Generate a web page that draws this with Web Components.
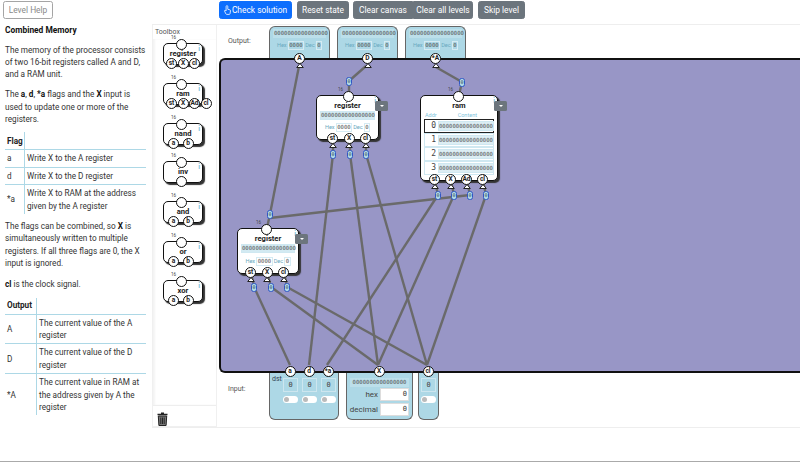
<!DOCTYPE html>
<html>
<head>
<meta charset="utf-8">
<title>Combined Memory</title>
<style>
  html, body { margin: 0; height: 462px; overflow: hidden; background: #fff; }
  body { font-family: Roboto, sans-serif; color: #333; }
</style>
</head>
<body>
<game-page></game-page>
<script>
const MONO = '"DejaVu Sans Mono", monospace';
const BITS = '0000000000000000';

class ToolBtn extends HTMLElement {
  constructor() {
    super();
    this.attachShadow({ mode: 'open' });
    this.shadowRoot.innerHTML = `
      <style>
        :host { display: block; flex: none; }
        div {
          display: flex; align-items: center; justify-content: center;
          height: 18px; box-sizing: border-box; border-radius: 2.5px;
          font-size: 8.4px; color: #fff; background: #6c757d; border: 1px solid #6c757d;
          white-space: nowrap;
        }
        :host([kind=primary]) div { background: #0d6efd; border-color: #0d6efd; }
        :host([kind=outline]) div { background: #fff; color: #8a8a8a; border-color: #a5a5a5; }
        :host([join=left]) div { border-radius: 2.5px 0 0 2.5px; }
        :host([join=right]) div { border-radius: 0 2.5px 2.5px 0; }
      </style>
      <div><slot></slot></div>`;
  }
}
customElements.define('tool-btn', ToolBtn);

class InfoTable extends HTMLElement {
  constructor() { super(); this.attachShadow({ mode: 'open' }); }
  connectedCallback() {
    const col = this.getAttribute('col');
    const rows = JSON.parse(this.getAttribute('rows'));
    this.shadowRoot.innerHTML = `
      <style>
        :host { display: block; }
        .t { display: grid; grid-template-columns: ${col}px 1fr; width: 141px; }
        .c { padding: 2px 0 2px 2px; line-height: 12.4px; display: flex; align-items: center; border-top: 1px solid #add8e6; }
        .c:nth-child(even) { border-left: 1px solid #add8e6; padding-left: 2px; }
        .h { border-top: 0; font-weight: 700; color: #222; height: ${this.getAttribute('head-h') || 17}px; box-sizing: border-box; }
      </style>
      <div class="t">
        <div class="c h">${this.getAttribute('head')}</div><div class="c h"></div>
        ${rows.map(r => `<div class="c">${r[0]}</div><div class="c">${r[1]}</div>`).join('')}
      </div>`;
  }
}
customElements.define('info-table', InfoTable);

class LevelPanel extends HTMLElement {
  constructor() {
    super();
    this.attachShadow({ mode: 'open' });
    this.shadowRoot.innerHTML = `
      <style>
        :host { display: block; width: 144px; flex: none; padding: 1px 0 0 5px; font-size: 8.2px; line-height: 12.4px; color: #333; }
        h2 { font-size: 8.4px; font-weight: 700; color: #111; margin: 5px 0 0; line-height: 12px; }
        p { margin: 7.5px 0 0; width: 143px; }
        b { color: #111; }
        tool-btn { width: 50px; margin-left: -2px; }
        info-table { margin-top: 7px; }
      </style>
      <tool-btn kind="outline">Level Help</tool-btn>
      <h2>Combined Memory</h2>
      <p>The memory of the processor consists of two 16-bit registers called A and D, and a RAM unit.</p>
      <p>The <b>a</b>, <b>d</b>, <b>*a</b> flags and the <b>X</b> input is used to update one or more of the registers.</p>
      <info-table head="Flag" col="19" rows='[["a","Write X to the A register"],["d","Write X to the D register"],["*a","Write X to RAM at the address given by the A register"]]'></info-table>
      <p style="margin-top:6px">The flags can be combined, so <b>X</b> is simultaneously written to multiple registers. If all three flags are 0, the X input is ignored.</p>
      <p style="margin-top:8.500px"><b>cl</b> is the clock signal.</p>
      <info-table head="Output" head-h="16" col="31" rows='[["A","The current value of the A register"],["D","The current value of the D register"],["*A","The current value in RAM at the address given by A the register"]]'></info-table>`;
  }
}
customElements.define('level-panel', LevelPanel);

// round connector: circle plus optional arrow and bus width note
class ConnPin extends HTMLElement {
  constructor() { super(); this.attachShadow({ mode: 'open' }); }
  connectedCallback() {
    const arrow = this.hasAttribute('arrow');
    this.shadowRoot.innerHTML = `
      <style>
        :host { display: block; position: absolute; width: 11px; height: 11px; left: ${this.getAttribute('x')}px; top: ${this.getAttribute('y')}px; margin: -5.5px 0 0 -5.5px; z-index: 3; }
        .o { width: 11px; height: 11px; box-sizing: border-box; border: 1.2px solid #111; border-radius: 50%; background: #fff; font: 700 6.6px/8.6px Roboto, sans-serif; color: #222; text-align: center; white-space: nowrap; }
        svg { position: absolute; left: 1.5px; top: 10px; }
        .w { position: absolute; left: -5px; top: -4px; font: 4.5px/5px Roboto, sans-serif; color: #444; }
      </style>
      <div class="o">${this.getAttribute('label') || ''}</div>
      ${this.hasAttribute('bus') ? '<span class="w">16</span>' : ''}
      ${arrow ? '<svg width="8" height="5" viewBox="0 0 8 5"><path d="M4 .5 7.3 4.5H.7Z" fill="#fff" stroke="#222" stroke-width="1"/></svg>' : ''}`;
  }
}
customElements.define('conn-pin', ConnPin);

// small value tag that sits on a wire
class WireTag extends HTMLElement {
  constructor() { super(); this.attachShadow({ mode: 'open' }); }
  connectedCallback() {
    this.shadowRoot.innerHTML = `
      <style>
        :host { position: absolute; display: block; left: ${this.getAttribute('x') - 3}px; top: ${this.getAttribute('y') - 4.5}px; z-index: 2; width: 6px; height: 9px; box-sizing: border-box; border: 1px solid #3157c4; border-radius: 2.5px; background: #add8e6; font: 5px/7px ${MONO}; color: #345; text-align: center; }
      </style>0`;
  }
}
customElements.define('wire-tag', WireTag);

class BitRow extends HTMLElement {
  constructor() {
    super();
    this.attachShadow({ mode: 'open' });
    this.shadowRoot.innerHTML = `
      <style>
        :host { display: block; font: 5.6px/7px ${MONO}; color: #555; background: #d3eaf2; border: 1px solid #cfe8f1; text-align: center; white-space: nowrap; }
      </style>${BITS}`;
  }
}
customElements.define('bit-row', BitRow);

class HexDec extends HTMLElement {
  constructor() {
    super();
    this.attachShadow({ mode: 'open' });
    this.shadowRoot.innerHTML = `
      <style>
        :host { display: flex; align-items: center; justify-content: center; gap: 1px; font: 5.6px/9px Roboto, sans-serif; color: #6aa9c0; white-space: nowrap; }
        span { font: 5.6px/7px ${MONO}; color: #555; border: 1px solid #d5ebf3; padding: 0 .5px; }
      </style>Hex <span>0000</span> Dec <span>0</span>`;
  }
}
customElements.define('hex-dec', HexDec);

class OutBox extends HTMLElement {
  constructor() { super(); this.attachShadow({ mode: 'open' }); }
  connectedCallback() {
    this.shadowRoot.innerHTML = `
      <style>
        :host { display: flex; flex-direction: column; gap: 3px; position: relative; width: 61px; height: 32px; box-sizing: border-box; padding: 2px 3px 0; background: #add8e6; border: 1px solid #666; border-bottom: 0; border-radius: 6px 6px 0 0; }
        bit-row { background: #bcdfea; border-color: #bcdfea; }
      </style>
      <bit-row></bit-row><hex-dec></hex-dec>
      <conn-pin x="29.500" y="31" label="${this.getAttribute('label')}" arrow></conn-pin>`;
  }
}
customElements.define('out-box', OutBox);

class Chip extends HTMLElement {
  constructor() { super(); this.attachShadow({ mode: 'open' }); }
  connectedCallback() {
    const w = +this.getAttribute('w'), h = +this.getAttribute('h');
    const pins = (this.getAttribute('pins') || '').split(',').filter(Boolean);
    const small = this.hasAttribute('small');
    const step = +this.getAttribute('step') || 16;
    const start = +this.getAttribute('start');
    const free = this.hasAttribute('x');
    this.shadowRoot.innerHTML = `
      <style>
        :host { display: block; position: ${free ? 'absolute' : 'relative'}; ${free ? `left:${this.getAttribute('x')}px;top:${this.getAttribute('y')}px;` : ''} width: ${w}px; height: ${h}px; box-sizing: border-box; background: #fff; border: 1.5px solid #111; border-radius: 5px; box-shadow: 2px 2px 1px #333; z-index: 1; }
        .n { text-align: center; font: 700 7.6px/10px Roboto, sans-serif; color: #222; margin-top: ${small ? 4.5 : 4.5}px; }
        .i { position: absolute; right: 2px; top: 1px; font: 700 7px/8px Roboto, sans-serif; color: #7fc4dc; }
        .menu { position: absolute; left: calc(100% - 3px); top: 5px; width: 13px; height: 10px; background: #6c757d; border-radius: 1.5px; }
        .menu::after { content: ""; position: absolute; left: 4.5px; top: 4px; border: 2px solid transparent; border-top: 2px solid #fff; }
        ::slotted(*) { margin: 0 3px; }
      </style>
      <div class="n">${this.getAttribute('name')}</div>
      <div class="i">i</div>
      <slot></slot>
      ${free ? '<div class="menu"></div>' : ''}
      <conn-pin x="${this.getAttribute('top')}" y="0" bus></conn-pin>
      ${pins.map((p, i) => `<conn-pin x="${start + i * step}" y="${h - 2.5}" label="${p}" ${free ? 'arrow' : ''}></conn-pin>`).join('')}`;
  }
}
customElements.define('chip-box', Chip);

class RamGrid extends HTMLElement {
  constructor() {
    super();
    this.attachShadow({ mode: 'open' });
    this.shadowRoot.innerHTML = `
      <style>
        :host { display: block; font: 5.5px/7px Roboto, sans-serif; color: #7fc4dc; }
        .h { display: flex; padding-left: 1px; margin-top: 1px; }
        .h span:last-child { margin-left: 21px; }
        .r { display: flex; align-items: center; height: 14px; border: 1px solid #cfe8f1; box-sizing: border-box; font: 8px/12px ${MONO}; color: #444; }
        .r.on { border: 1px solid #222; }
        .r b { font-weight: 400; width: 11px; text-align: right; flex: none; margin-right: 2px; }
        .r i { flex: 1; margin-right: 1px; font: normal 5.6px/8px ${MONO}; color: #555; background: #dcedf3; border: 1px solid #cfe8f1; white-space: nowrap; text-align: center; }
      </style>
      <div class="h"><span>Addr</span><span>Content</span></div>
      ${[0, 1, 2, 3].map(n => `<div class="r ${n ? '' : 'on'}"><b>${n}</b><i>${BITS}</i></div>`).join('')}`;
  }
}
customElements.define('ram-grid', RamGrid);

class ToolBox extends HTMLElement {
  constructor() {
    super();
    this.attachShadow({ mode: 'open' });
    this.shadowRoot.innerHTML = `
      <style>
        :host { display: flex; flex-direction: column; width: 65px; flex: none; box-sizing: border-box; margin-right: 2px; border: 1px solid #f0f0f0; border-top: 0; }
        .t { font-size: 7px; line-height: 10px; padding: 2px 0 0 2px; height: 14px; box-sizing: border-box; color: #555; }
        .l { flex: 1; background: #fff; position: relative; box-shadow: inset 2px 0 2px #f4f4f4; }
        chip-box { position: absolute; left: 10px; }
        .b { height: 21px; border-top: 1px solid #eee; padding: 5px 0 0 4px; box-sizing: border-box; }
      </style>
      <div class="t">Toolbox</div>
      <div class="l">
        <chip-box small name="register" w="40" h="22" pins="st,X,cl" start="7.500" step="11.500" top="17.500" style="top:4px"></chip-box>
        <chip-box small name="ram" w="40" h="22" pins="st,X,Ad,cl" start="7.500" step="11.500" top="17.500" style="top:44px"></chip-box>
        <chip-box small name="nand" w="40" h="22" pins="a,b" start="9.500" step="14.500" top="17.500" style="top:84px"></chip-box>
        <chip-box small name="inv" w="40" h="22" pins=" " start="17.500" top="17.500" style="top:122px"></chip-box>
        <chip-box small name="and" w="40" h="22" pins="a,b" start="9.500" step="14.500" top="17.500" style="top:162px"></chip-box>
        <chip-box small name="or" w="40" h="22" pins="a,b" start="9.500" step="14.500" top="17.500" style="top:202px"></chip-box>
        <chip-box small name="xor" w="40" h="22" pins="a,b" start="9.500" step="14.500" top="17.500" style="top:241px"></chip-box>
      </div>
      <div class="b"><svg width="11" height="14" viewBox="0 0 11 14"><path d="M4 .5h3v1.200h3.500v1.500H.5V1.700H4Z" fill="#222"/><path d="M1.300 4h8.400l-.6 9.500H1.900Z" fill="#777" stroke="#222"/><path d="M3.800 5.500v6.500M5.500 5.500v6.500M7.200 5.500v6.500" stroke="#111" stroke-width=".8"/></svg></div>`;
  }
}
customElements.define('tool-box', ToolBox);

class InCell extends HTMLElement {
  constructor() {
    super();
    this.attachShadow({ mode: 'open' });
    this.shadowRoot.innerHTML = `
      <style>
        :host { display: flex; flex-direction: column; align-items: center; gap: 4px; width: 15px; }
        .v { width: 15px; height: 14px; box-sizing: border-box; border: 1px solid #cde6ef; font: 7px/12px ${MONO}; color: #444; text-align: center; }
        .s { width: 15px; height: 7px; border-radius: 4px; background: #fff; position: relative; }
        .s::after { content: ""; position: absolute; left: 1px; top: 1px; width: 5px; height: 5px; border-radius: 50%; background: #bbb; }
      </style>
      <div class="v">0</div><div class="s"></div>`;
  }
}
customElements.define('in-cell', InCell);

class InBox extends HTMLElement {
  constructor() {
    super();
    this.attachShadow({ mode: 'open' });
    this.shadowRoot.innerHTML = `
      <style>
        :host { display: block; position: relative; height: 47px; box-sizing: border-box; background: #add8e6; border: 1px solid #666; border-top: 0; border-radius: 0 0 6px 6px; }
      </style><slot></slot>`;
  }
}
customElements.define('in-box', InBox);

class NumField extends HTMLElement {
  constructor() {
    super();
    this.attachShadow({ mode: 'open' });
    this.shadowRoot.innerHTML = `
      <style>
        :host { display: flex; align-items: center; justify-content: flex-end; gap: 2px; font: 8px/13px Roboto, sans-serif; color: #444; padding-right: 3px; }
        div { width: 29px; height: 13px; box-sizing: border-box; background: #fff; border: 1px solid #ddd; font: 7px/11px ${MONO}; text-align: right; padding-right: 1px; color: #333; }
      </style><slot></slot><div>0</div>`;
  }
}
customElements.define('num-field', NumField);

class WireCanvas extends HTMLElement {
  constructor() {
    super();
    this.attachShadow({ mode: 'open' });
    // coordinates are relative to the canvas corner
    const w = [
      [80, 8, 51, 156], [147, 8, 130, 23], [130, 23, 130, 37], [215, 8, 243, 24], [243, 24, 240, 37],
      [51, 160, 251, 137], [48, 170, 51, 156],
      [32, 214, 35, 229], [48, 214, 52, 229], [65, 214, 68, 229],
      [35, 229, 71, 307], [52, 229, 159, 307], [68, 229, 208, 307],
      [114, 82, 114, 96], [131, 82, 131, 96], [147, 82, 147, 96],
      [114, 96, 90, 307], [131, 96, 159, 307], [147, 96, 208, 307],
      [216, 123, 219, 137], [232, 123, 235, 137], [248, 123, 251, 137], [264, 123, 267, 137],
      [219, 137, 108, 307], [235, 137, 159, 307], [267, 137, 208, 307]
    ];
    const tags = [[130, 23], [243, 24], [51, 156], [114, 96], [131, 96], [147, 96], [35, 229], [52, 229], [68, 229], [219, 137], [235, 137], [251, 137], [267, 137]];
    this.shadowRoot.innerHTML = `
      <style>
        :host { display: block; position: relative; width: 600px; height: 315px; box-sizing: border-box; background: #9896c6; border: 2px solid #111; border-right: 0; border-radius: 6px 0 0 6px; flex: none; }
        svg { position: absolute; left: -2px; top: -2px; }
        .c { position: absolute; left: -2px; top: -2px; }
      </style>
      <svg width="600" height="315">${w.map(l => `<line x1="${l[0]}" y1="${l[1]}" x2="${l[2]}" y2="${l[3]}" stroke="#6a6a6a" stroke-width="2.400"/>`).join('')}</svg>
      <div class="c">
        ${tags.map(t => `<wire-tag x="${t[0]}" y="${t[1]}"></wire-tag>`).join('')}
        <chip-box name="register" x="97" y="37" w="63" h="45" pins="st,X,cl" start="15.500" step="16.500" top="31.500"><bit-row></bit-row><hex-dec style="margin-top:3px"></hex-dec></chip-box>
        <chip-box name="ram" x="201" y="37" w="78" h="86" pins="st,X,Ad,cl" start="13.500" step="16" top="37.500"><ram-grid></ram-grid></chip-box>
        <chip-box name="register" x="18" y="170" w="62" h="46" pins="st,X,cl" start="12.500" step="16.500" top="28.500"><bit-row></bit-row><hex-dec style="margin-top:4px"></hex-dec></chip-box>
      </div>`;
  }
}
customElements.define('wire-canvas', WireCanvas);

class GamePage extends HTMLElement {
  constructor() {
    super();
    this.attachShadow({ mode: 'open' });
    this.shadowRoot.innerHTML = `
      <style>
        :host { display: flex; width: 800px; height: 462px; box-sizing: border-box; overflow: hidden; border-bottom: 1px solid #aaa; align-items: flex-start; }
        .main { flex: none; width: 648px; margin-left: 3px; }
        .bar { display: flex; height: 24px; padding: 1px 0 0 67px; box-sizing: border-box; }
        .bar tool-btn { margin-right: 5px; }
        .group { display: flex; margin-right: 5px; }
        .group tool-btn { margin-right: 0; }
        .work { display: flex; height: 404px; border-top: 1px solid #eee; border-bottom: 1px solid #eee; box-sizing: border-box; }
        .dia { width: 581px; flex: none; display: flex; flex-direction: column; overflow: hidden; }
        .out, .in { display: flex; flex: none; position: relative; font-size: 7px; color: #555; }
        .out { height: 33px; padding: 1px 0 0 50px; box-sizing: border-box; gap: 7px; }
        .lbl { position: absolute; left: 9px; top: 12px; }
        .in { padding-left: 50px; height: 54px; }
        .in .lbl { top: 12px; }
        .cells { display: flex; gap: 4px; padding: 5px 0 0 13px; }
        .dst { position: absolute; left: 2px; top: 2px; font-size: 7px; color: #345; }
        .x { padding-top: 5px; display: flex; flex-direction: column; gap: 2px; }
        .x bit-row { margin: 0 3px -1px; background: #bcdfea; border-color: #bcdfea; }
      </style>
      <level-panel></level-panel>
      <div class="main">
        <div class="bar">
          <tool-btn kind="primary" style="width:73px"><svg width="7" height="10" viewBox="0 0 7 10" style="margin-right:1px"><path d="M3 .6c.5 0 .8.4.8.9v2.800l2 .5c.5.1.8.5.7 1L6 8.800c-.1.4-.4.6-.8.6H2.700c-.3 0-.6-.2-.8-.5L.6 6.200c-.2-.4 0-.9.5-.9.300 0 .6.200 1 .7V1.500c0-.5.4-.9.900-.9Z" fill="none" stroke="#fff" stroke-width=".8"/></svg>Check solution</tool-btn>
          <tool-btn style="width:52px;margin-right:4px">Reset state</tool-btn>
          <div class="group">
            <tool-btn join="left" style="width:60px">Clear canvas</tool-btn>
            <tool-btn join="right" style="width:60px">Clear all levels</tool-btn>
          </div>
          <tool-btn style="width:47px">Skip level</tool-btn>
        </div>
        <div class="work">
          <tool-box></tool-box>
          <div class="dia">
            <div class="out">
              <span class="lbl">Output:</span>
              <out-box label="A"></out-box><out-box label="D"></out-box><out-box label="*A"></out-box>
            </div>
            <wire-canvas></wire-canvas>
            <div class="in">
              <span class="lbl">Input:</span>
              <in-box style="width:70px;margin-right:7px">
                <span class="dst">dst</span>
                <div class="cells"><in-cell></in-cell><in-cell></in-cell><in-cell></in-cell></div>
                <conn-pin x="20" y="-2" label="a"></conn-pin><conn-pin x="39" y="-2" label="d"></conn-pin><conn-pin x="58" y="-2" label="*a"></conn-pin>
              </in-box>
              <in-box style="width:67px;margin-right:5px">
                <div class="x"><bit-row></bit-row><num-field>hex</num-field><num-field>decimal</num-field></div>
                <conn-pin x="32" y="-2" label="X"></conn-pin>
              </in-box>
              <in-box style="width:21px">
                <div class="cells" style="padding-left:2px"><in-cell></in-cell></div>
                <conn-pin x="9" y="-2" label="cl"></conn-pin>
              </in-box>
            </div>
          </div>
        </div>
      </div>`;
  }
}
customElements.define('game-page', GamePage);
</script>
</body>
</html>
